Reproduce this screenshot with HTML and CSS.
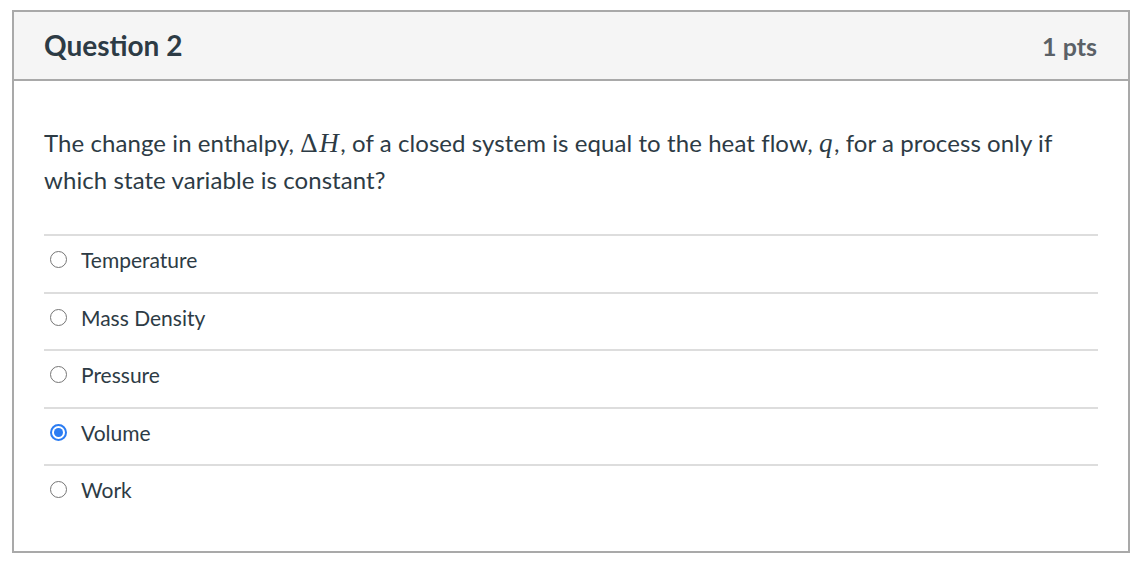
FILE: index.html
```html
<!DOCTYPE html>
<html>
<head>
<meta charset="utf-8">
<link rel="stylesheet" href="styles.css">
</head>
<body>
<div class="question">
  <div class="q-header">
    <span class="q-title">Question 2</span>
    <span class="q-points">1 pts</span>
  </div>
  <div class="q-body">
    <p class="q-text">The change in enthalpy, <span class="math"><span class="up">Δ</span><i>H</i></span>, of a closed system is equal to the heat flow, <span class="math"><i>q</i></span>, for a process only if which state variable is constant?</p>
    <div class="answers">
      <label class="answer"><span class="radio"></span><span class="label">Temperature</span></label>
      <label class="answer"><span class="radio"></span><span class="label">Mass Density</span></label>
      <label class="answer"><span class="radio"></span><span class="label">Pressure</span></label>
      <label class="answer"><span class="radio checked"></span><span class="label">Volume</span></label>
      <label class="answer"><span class="radio"></span><span class="label">Work</span></label>
    </div>
  </div>
</div>
</body>
</html>
```
FILE: styles.css
```css
html, body {
  margin: 0;
  padding: 0;
  background: #ffffff;
}
body {
  font-family: Lato, "Liberation Sans", sans-serif;
  color: #2d3b45;
}
.question {
  margin: 10px 0 0 12px;
  width: 1118px;
  box-sizing: border-box;
  border: 2px solid #a9a9a9;
}
.q-header {
  display: flex;
  align-items: center;
  justify-content: space-between;
  height: 67px;
  padding: 0 31px 0 30px;
  background: #f5f5f5;
  border-bottom: 2px solid #a9a9a9;
}
.q-title {
  font-weight: 700;
  font-size: 28px;
  color: #2d3b45;
  margin-bottom: 2px;
}
.q-points {
  font-weight: 700;
  font-size: 25px;
  color: #5b6167;
}
.q-body {
  padding: 43px 30px 29.5px 30px;
}
.q-text {
  margin: 0 0 36px 0;
  font-size: 24px;
  line-height: 37px;
  letter-spacing: 0.08px;
}
.math {
  font-family: "Liberation Serif", "DejaVu Serif", serif;
  font-size: 27px;
  line-height: 1;
  letter-spacing: 1.5px;
}
.math i {
  font-style: italic;
}
.math .up {
  font-style: normal;
}
.answers {
  display: flex;
  flex-direction: column;
}
.answer {
  display: flex;
  align-items: center;
  box-sizing: border-box;
  height: 57.5px;
  padding-bottom: 8px;
  border-top: 2px solid #dddddd;
  font-size: 21px;
}
.radio {
  box-sizing: border-box;
  width: 17px;
  height: 17px;
  border: 1px solid #767676;
  border-radius: 50%;
  margin: 0 14px 0 6px;
  background: #fff;
  position: relative;
}
.radio.checked {
  border: 2px solid #2b7cf2;
}
.radio.checked::after {
  content: "";
  position: absolute;
  left: 2px;
  top: 2px;
  width: 9px;
  height: 9px;
  border-radius: 50%;
  background: #2b7cf2;
}
.label {
  color: #2d3b45;
}
```
